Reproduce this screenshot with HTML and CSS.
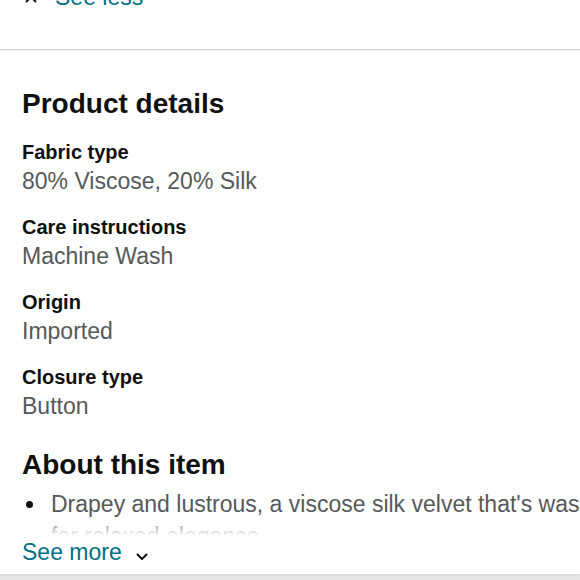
FILE: index.html
```html
<!DOCTYPE html>
<html lang="en">
<head>
<meta charset="utf-8">
<title>Product details</title>
<link rel="stylesheet" href="styles.css">
</head>
<body>
<div class="page">
  <a class="toggle toggle-less" href="#">
    <svg class="chev chev-up" width="12" height="8" viewBox="0 0 12 8" aria-hidden="true"><path d="M1.5 6.5 L6 2 L10.5 6.5" fill="none" stroke="#0f1111" stroke-width="2" stroke-linecap="round" stroke-linejoin="round"/></svg>
    <span>See less</span>
  </a>
  <div class="divider"></div>
  <section class="details">
    <h2 class="title">Product details</h2>
    <dl class="specs">
      <div class="spec"><dt>Fabric type</dt><dd>80% Viscose, 20% Silk</dd></div>
      <div class="spec"><dt>Care instructions</dt><dd>Machine Wash</dd></div>
      <div class="spec"><dt>Origin</dt><dd>Imported</dd></div>
      <div class="spec"><dt>Closure type</dt><dd>Button</dd></div>
    </dl>
    <h2 class="title about-title">About this item</h2>
    <div class="about-clip">
      <ul class="about-list">
        <li>Drapey and lustrous, a viscose silk velvet that's washable for relaxed elegance</li>
      </ul>
    </div>
    <a class="toggle toggle-more" href="#">
      <span>See more</span>
      <svg class="chev chev-down" width="12" height="8" viewBox="0 0 12 8" aria-hidden="true"><path d="M1.5 1.5 L6 6 L10.5 1.5" fill="none" stroke="#0f1111" stroke-width="2" stroke-linecap="round" stroke-linejoin="round"/></svg>
    </a>
  </section>
  <div class="footer-bar"></div>
</div>
</body>
</html>
```
FILE: styles.css
```css
html, body {
  margin: 0;
  padding: 0;
  background: #ffffff;
  height: 580px;
  overflow: hidden;
}

.page {
  font-family: "Liberation Sans", Arial, sans-serif;
  color: #0f1111;
}

.toggle {
  display: flex;
  align-items: center;
  color: #007185;
  text-decoration: none;
  font-size: 23px;
  line-height: 30px;
}

.toggle-less {
  margin-top: -18px;
  padding-left: 25px;
  gap: 18px;
}

.chev-up {
  margin-top: 4px;
}

.divider {
  margin-top: 37px;
  height: 1px;
  background: #d5d9d9;
  border-bottom: 1px solid #eaeded;
}

.details {
  padding: 36px 0 0 22px;
}

.title {
  margin: 0;
  font-size: 28px;
  line-height: 34px;
  font-weight: 700;
  color: #0f1111;
}

.specs {
  margin: 19px 0 0 0;
  display: flex;
  flex-direction: column;
  gap: 20px;
}

.spec dt {
  font-size: 20px;
  line-height: 24px;
  font-weight: 700;
  color: #0f1111;
}

.spec dd {
  margin: 3px 0 0 0;
  font-size: 23px;
  line-height: 28px;
  color: #565959;
}

.about-title {
  margin-top: 28px;
}

.about-clip {
  position: relative;
  margin-top: 6px;
  height: 51px;
  overflow: hidden;
}

.about-clip::after {
  content: "";
  position: absolute;
  left: 0;
  right: 0;
  bottom: 0;
  height: 22px;
  background: linear-gradient(rgba(255, 255, 255, 0), #ffffff 85%);
}

.about-list {
  margin: 0;
  padding: 0;
  list-style: none;
}

.about-list li {
  display: flex;
  font-size: 23px;
  line-height: 32px;
  color: #565959;
  width: 620px;
}

.about-list li::before {
  content: "";
  flex: 0 0 7px;
  width: 7px;
  height: 7px;
  border-radius: 50%;
  background: #0f1111;
  margin: 13px 18px 0 4px;
}

.toggle-more {
  line-height: 26px;
  gap: 14px;
}

.chev-down {
  margin-top: 9px;
}

.footer-bar {
  margin-top: 9px;
  height: 20px;
  background: linear-gradient(#d5d9d9, #e6e6e6 2px, #e3e6e6);
}
```
